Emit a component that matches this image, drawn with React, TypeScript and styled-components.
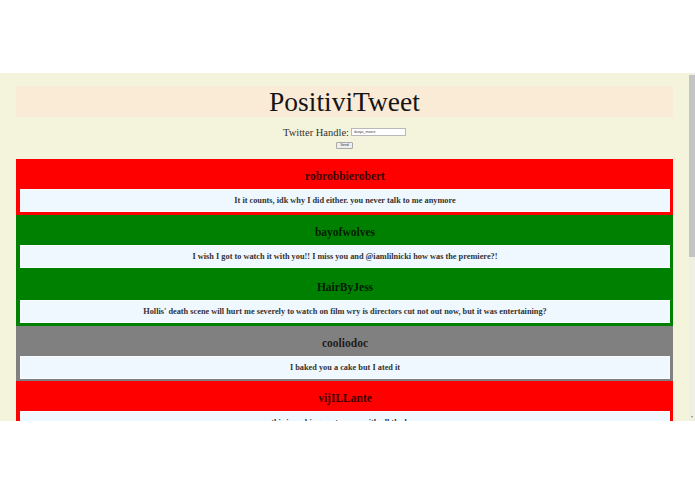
import React from 'react';
import styled, { createGlobalStyle } from 'styled-components';

const Global = createGlobalStyle`
  html, body { margin: 0; padding: 0; background: #ffffff; }
  body { font-family: "Liberation Serif", "Times New Roman", serif; }
`;

const Page = styled.div`
  width: 695px;
  height: 494px;
  display: flex;
  flex-direction: column;
  background: #ffffff;
`;

const TopSpace = styled.div`
  height: 73px;
  flex: none;
`;

const Frame = styled.div`
  height: 348px;
  flex: none;
  display: flex;
  background: #f4f4dc;
`;

const Viewport = styled.div`
  flex: 1;
  overflow: hidden;
`;

const ScrollTrack = styled.div`
  width: 6px;
  flex: none;
  display: flex;
  flex-direction: column;
  justify-content: space-between;
  align-items: center;
  background: #efefe3;
  padding: 2px 0 3px;
  box-sizing: border-box;
`;

const ScrollThumb = styled.div`
  width: 6px;
  height: 182px;
  background: #c4c4c4;
`;

const ScrollArrow = styled.div`
  width: 0;
  height: 0;
  border-left: 1.5px solid transparent;
  border-right: 1.5px solid transparent;
  border-top: 2px solid #8a8a8a;
`;

const Content = styled.div`
  padding: 13px 16px 30px 16px;
  display: flex;
  flex-direction: column;
`;

const Header = styled.h1`
  margin: 0;
  height: 31px;
  background: #faebd7;
  display: flex;
  align-items: center;
  justify-content: center;
  font-size: 27.5px;
  font-weight: normal;
  color: #151515;
`;

const Form = styled.form`
  margin-top: 9px;
  display: flex;
  flex-direction: column;
  align-items: center;
`;

const LabelRow = styled.label`
  display: flex;
  align-items: center;
  gap: 2px;
  height: 12px;
  font-size: 10.5px;
  color: #333;
`;

const Input = styled.input`
  width: 55px;
  height: 8px;
  box-sizing: border-box;
  border: 1px solid #b8b8b8;
  background: #fff;
  padding: 0 2px;
  font-size: 3.5px;
  font-family: "Liberation Sans", sans-serif;
  color: #444;
  outline: none;
`;

const SendButton = styled.button`
  margin-top: 4px;
  width: 17px;
  height: 7px;
  padding: 0;
  box-sizing: border-box;
  border: 1px solid #aaa;
  border-radius: 1px;
  background: #eeeeee;
  font-size: 3.5px;
  font-family: "Liberation Sans", sans-serif;
  color: #333;
  line-height: 1;
`;

const Feed = styled.div`
  margin-top: 10px;
  display: flex;
  flex-direction: column;
`;

const Card = styled.div<{ $bg: string }>`
  background: ${(p) => p.$bg};
  padding: 0 3px 2.5px 4px;
  display: flex;
  flex-direction: column;
`;

const Handle = styled.h3`
  margin: 0;
  height: 30px;
  box-sizing: border-box;
  padding-top: 11px;
  line-height: 13px;
  text-align: center;
  font-size: 11.5px;
  font-weight: bold;
  color: rgba(0, 0, 0, 0.8);
`;

const TweetBox = styled.div`
  height: 23px;
  box-sizing: border-box;
  background: #f0f8ff;
  border: 1px solid rgba(255, 255, 255, 0.5);
  display: flex;
  align-items: center;
  justify-content: center;
  font-size: 8.3px;
  font-weight: bold;
  color: #333;
  white-space: nowrap;
  overflow: hidden;
`;

type Tweet = { user: string; text: string; color: string };

const tweets: Tweet[] = [
  { user: 'robrobbierobert', text: 'It it counts, idk why I did either. you never talk to me anymore', color: '#ff0000' },
  { user: 'bayofwolves', text: 'I wish I got to watch it with you!! I miss you and @iamlilnicki how was the premiere?!', color: '#008000' },
  { user: 'HairByJess', text: "Hollis' death scene will hurt me severely to watch on film wry is directors cut not out now, but it was entertaining?", color: '#008000' },
  { user: 'cooliodoc', text: 'I baked you a cake but I ated it', color: '#808080' },
  { user: 'vijILLante', text: 'this is making me tear up with all the love', color: '#ff0000' },
];

export default function App() {
  return (
    <Page>
      <Global />
      <TopSpace />
      <Frame>
        <Viewport>
          <Content>
            <Header>PositiviTweet</Header>
            <Form onSubmit={(e) => e.preventDefault()}>
              <LabelRow>
                Twitter Handle:
                <Input defaultValue="danya_moore" />
              </LabelRow>
              <SendButton type="submit">Send</SendButton>
            </Form>
            <Feed>
              {tweets.map((t, i) => (
                <Card key={i} $bg={t.color}>
                  <Handle>{t.user}</Handle>
                  <TweetBox>{t.text}</TweetBox>
                </Card>
              ))}
            </Feed>
          </Content>
        </Viewport>
        <ScrollTrack>
          <ScrollThumb />
          <ScrollArrow />
        </ScrollTrack>
      </Frame>
    </Page>
  );
}
